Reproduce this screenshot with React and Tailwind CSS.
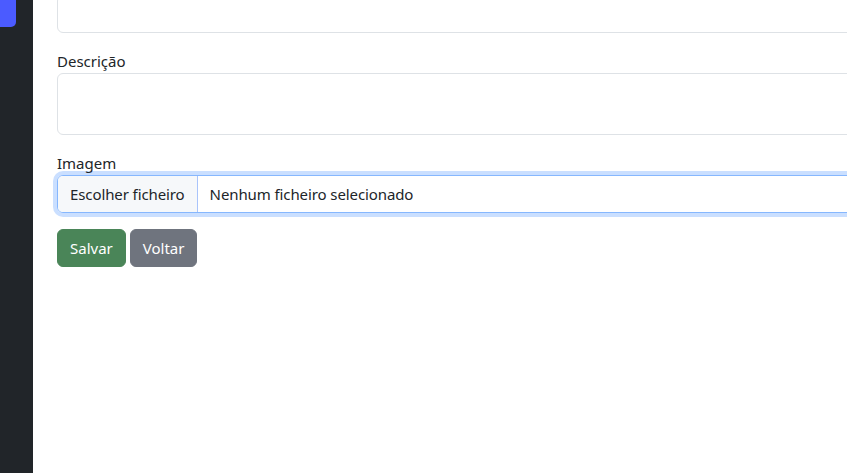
import React from 'react';

const App = () => {
  return (
    <div
      className="flex w-[847px] h-[473px] overflow-hidden bg-white text-[#212529] text-[15px]"
      style={{ fontFamily: '"Noto Sans", sans-serif' }}
    >
      <aside className="w-[33px] shrink-0 bg-[#212529]">
        <div className="w-[16px] h-[27px] bg-[#4b5bff] rounded-br-[5px]" />
      </aside>
      <main className="flex-1 min-w-0 pl-[24px]">
        <form className="w-[1000px] mt-[-5px]">
          <div className="mb-4">
            <div className="h-[38px] border border-[#dee2e6] rounded-[6px]" />
          </div>
          <div className="mb-4">
            <label className="block leading-[24px]">Descrição</label>
            <div className="h-[62px] border border-[#dee2e6] rounded-[6px]" />
          </div>
          <div className="mb-4">
            <label className="block leading-[24px]">Imagem</label>
            <div className="flex h-[38px] border border-[#86b7fe] rounded-[6px] shadow-[0_0_0_4px_rgba(13,110,253,0.22)] overflow-hidden tracking-[-0.1px]">
              <span className="flex items-center px-3 bg-[#f6f8fa] border-r border-[#a9c4fb]">
                Escolher ficheiro
              </span>
              <span className="flex items-center px-3">Nenhum ficheiro selecionado</span>
            </div>
          </div>
          <div className="flex gap-1">
            <button
              type="button"
              className="h-[38px] px-3 border border-[#4a8558] rounded-[6px] bg-[#4a8558] text-white"
            >
              Salvar
            </button>
            <button
              type="button"
              className="h-[38px] px-3 border border-[#6f747e] rounded-[6px] bg-[#6f747e] text-white"
            >
              Voltar
            </button>
          </div>
        </form>
      </main>
    </div>
  );
};

export default App;
